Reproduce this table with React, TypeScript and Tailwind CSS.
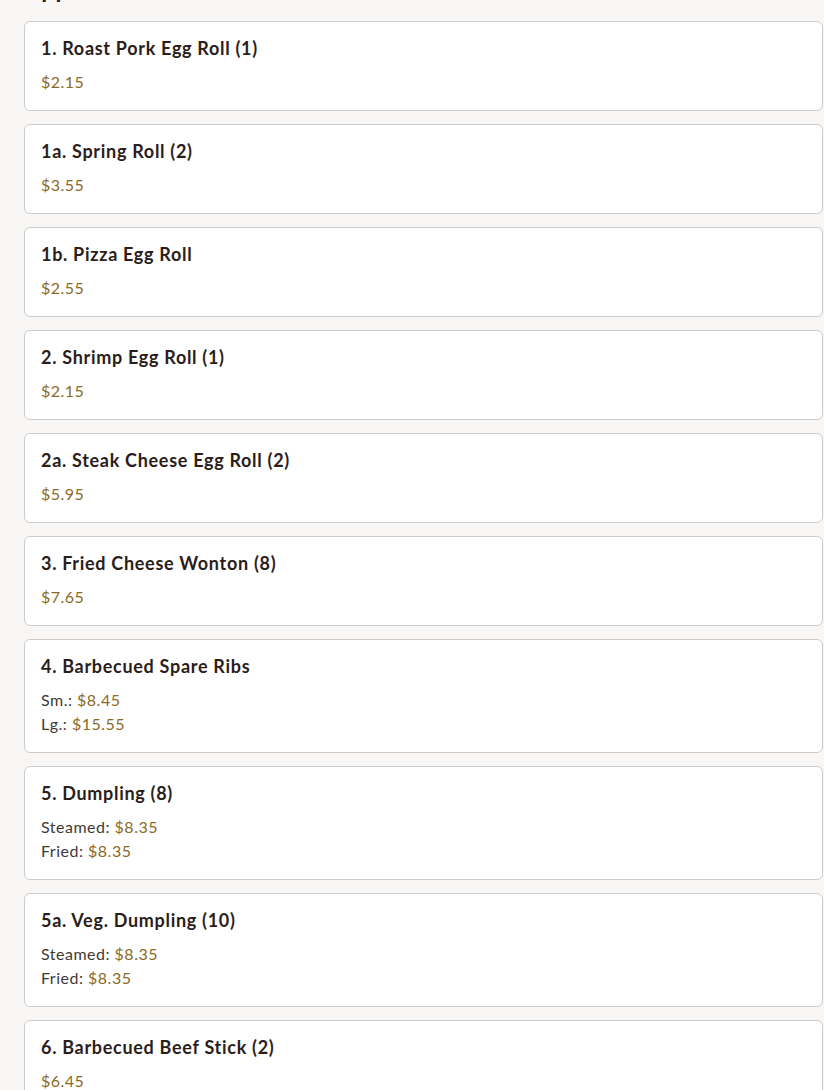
type Item = {
  name: string
  prices: { label?: string; price: string }[]
}

const items: Item[] = [
  { name: '1. Roast Pork Egg Roll (1)', prices: [{ price: '$2.15' }] },
  { name: '1a. Spring Roll (2)', prices: [{ price: '$3.55' }] },
  { name: '1b. Pizza Egg Roll', prices: [{ price: '$2.55' }] },
  { name: '2. Shrimp Egg Roll (1)', prices: [{ price: '$2.15' }] },
  { name: '2a. Steak Cheese Egg Roll (2)', prices: [{ price: '$5.95' }] },
  { name: '3. Fried Cheese Wonton (8)', prices: [{ price: '$7.65' }] },
  {
    name: '4. Barbecued Spare Ribs',
    prices: [
      { label: 'Sm.:', price: '$8.45' },
      { label: 'Lg.:', price: '$15.55' },
    ],
  },
  {
    name: '5. Dumpling (8)',
    prices: [
      { label: 'Steamed:', price: '$8.35' },
      { label: 'Fried:', price: '$8.35' },
    ],
  },
  {
    name: '5a. Veg. Dumpling (10)',
    prices: [
      { label: 'Steamed:', price: '$8.35' },
      { label: 'Fried:', price: '$8.35' },
    ],
  },
  { name: '6. Barbecued Beef Stick (2)', prices: [{ price: '$6.45' }] },
]

export default function App() {
  return (
    <main
      className="min-h-screen overflow-hidden bg-[#f8f7f5] pl-6 pr-px"
      style={{ fontFamily: 'Lato, "Noto Sans", sans-serif' }}
    >
      {/* section heading scrolled mostly out of view */}
      <h2 className="-mt-[25px] mb-[18px] text-[24px] font-bold leading-[28px] tracking-[0.6px] text-[#2b1d1a]">
        Appetizers
      </h2>
      <div className="flex flex-col gap-[13px]">
        {items.map((item) => (
          <div
            key={item.name}
            className="rounded-md border border-[#cccccc] bg-white p-4"
          >
            <h3 className="mb-3 text-[18px] font-bold leading-[20px] tracking-[0.7px] text-[#2b1d1a]">
              {item.name}
            </h3>
            {item.prices.map((p, i) => (
              <p key={i} className="text-base leading-6 tracking-[0.5px] text-[#3f3a36]">
                {p.label && <span>{p.label} </span>}
                <span className="text-[#8a6a24]">{p.price}</span>
              </p>
            ))}
          </div>
        ))}
      </div>
    </main>
  )
}
